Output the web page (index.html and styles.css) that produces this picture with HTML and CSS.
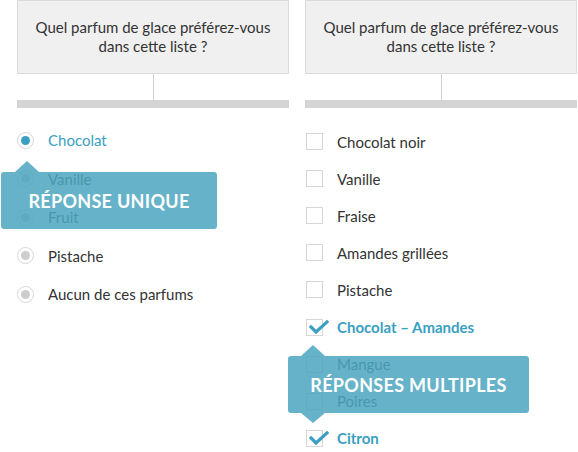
FILE: index.html
```html
<!DOCTYPE html>
<html lang="fr">
<head>
<meta charset="utf-8">
<link rel="stylesheet" href="styles.css">
</head>
<body>
<div class="page">
  <section class="col">
    <div class="question">Quel parfum de glace préférez-vous<br>dans cette liste ?</div>
    <div class="connector"></div>
    <div class="bar"></div>
    <ul class="list list-radio">
      <li class="item selected"><span class="radio"></span>Chocolat</li>
      <li class="item"><span class="radio"></span>Vanille</li>
      <li class="item"><span class="radio"></span>Fruit</li>
      <li class="item"><span class="radio"></span>Pistache</li>
      <li class="item"><span class="radio"></span>Aucun de ces parfums</li>
    </ul>
  </section>
  <section class="col">
    <div class="question">Quel parfum de glace préférez-vous<br>dans cette liste ?</div>
    <div class="connector"></div>
    <div class="bar"></div>
    <ul class="list list-check">
      <li class="item"><span class="box"></span>Chocolat noir</li>
      <li class="item"><span class="box"></span>Vanille</li>
      <li class="item"><span class="box"></span>Fraise</li>
      <li class="item"><span class="box"></span>Amandes grillées</li>
      <li class="item"><span class="box"></span>Pistache</li>
      <li class="item checked"><span class="box"><svg class="tick" viewBox="0 0 20 14" width="20" height="14"><path d="M2 7 L7 12 L18 2" fill="none" stroke="#3a9fc2" stroke-width="3.2" stroke-linecap="square"/></svg></span>Chocolat – Amandes</li>
      <li class="item"><span class="box"></span>Mangue</li>
      <li class="item"><span class="box"></span>Poires</li>
      <li class="item checked"><span class="box"><svg class="tick" viewBox="0 0 20 14" width="20" height="14"><path d="M2 7 L7 12 L18 2" fill="none" stroke="#3a9fc2" stroke-width="3.2" stroke-linecap="square"/></svg></span>Citron</li>
    </ul>
  </section>
</div>
<div class="tip tip-single">Réponse unique</div>
<div class="tip tip-multi">Réponses multiples</div>
</body>
</html>
```
FILE: styles.css
```css
* { box-sizing: border-box; }
html, body { margin: 0; padding: 0; background: #fff; }
body {
  width: 578px;
  height: 452px;
  overflow: hidden;
  position: relative;
  font-family: "Lato", "Open Sans", sans-serif;
  color: #333;
}
.page {
  display: flex;
  gap: 16px;
  padding-left: 17px;
}
.col {
  width: 272px;
  display: flex;
  flex-direction: column;
}
.question {
  height: 74px;
  background: #f0f0f0;
  border: 1px solid #dcdcdc;
  text-align: center;
  font-size: 15px;
  line-height: 19px;
  padding-top: 17px;
  color: #333;
}
.connector {
  width: 1px;
  height: 26px;
  background: #cfcfcf;
  margin-left: 136px;
}
.bar {
  height: 8px;
  background: #d4d4d4;
}
.list {
  list-style: none;
  margin: 0;
  padding: 0;
}
.list-radio { padding-top: 13px; }
.list-check { padding-top: 15px; }
.item {
  display: flex;
  align-items: center;
  font-size: 15px;
}
.list-radio .item { height: 38.5px; }
.list-check .item { height: 37.1px; }
.radio {
  width: 17px;
  height: 17px;
  border-radius: 50%;
  border: 1px solid #d6d6d6;
  margin-right: 14px;
  display: flex;
  align-items: center;
  justify-content: center;
  flex: none;
}
.radio::after {
  content: "";
  width: 9px;
  height: 9px;
  border-radius: 50%;
  background: #cdcdcd;
}
.selected { color: #3a9fc2; }
.selected .radio::after { background: #3a9fc2; }
.box {
  width: 17px;
  height: 17px;
  border: 1px solid #d6d6d6;
  margin-left: 1px;
  margin-right: 14px;
  position: relative;
  flex: none;
}
.checked { color: #3a9fc2; font-weight: 700; }
.tick {
  position: absolute;
  left: 2px;
  top: 0px;
}
.tip {
  position: absolute;
  height: 57px;
  background: rgba(77, 166, 192, 0.86);
  border-radius: 3px;
  color: #fff;
  font-weight: 700;
  font-size: 18px;
  text-transform: uppercase;
  display: flex;
  align-items: center;
  justify-content: center;
  letter-spacing: 0.3px;
}
.tip::before, .tip::after {
  content: "";
  position: absolute;
  width: 0;
  height: 0;
  border-left: 12px solid transparent;
  border-right: 12px solid transparent;
}
.tip-single { left: 1px; top: 172px; width: 216px; }
.tip-single::before {
  left: 14px;
  top: -11px;
  border-bottom: 11px solid rgba(77, 166, 192, 0.86);
}
.tip-single::after { display: none; }
.tip-multi { left: 288px; top: 356px; width: 241px; }
.tip-multi::before {
  left: 13px;
  top: -11px;
  border-bottom: 11px solid rgba(77, 166, 192, 0.86);
}
.tip-multi::after {
  left: 13px;
  bottom: -10px;
  border-top: 10px solid rgba(77, 166, 192, 0.86);
}
```
